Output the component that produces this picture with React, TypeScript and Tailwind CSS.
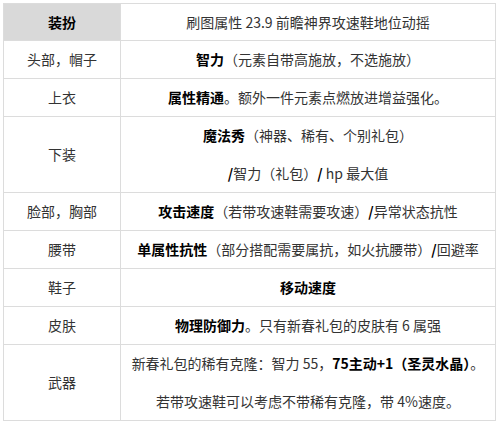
import React from 'react';

type Row = {
  part: string;
  lines: React.ReactNode[];
};

const rows: Row[] = [
  {
    part: '头部，帽子',
    lines: [<><b>智力</b>（元素自带高施放，不选施放）</>],
  },
  {
    part: '上衣',
    lines: [<><b>属性精通</b>。额外一件元素点燃放进增益强化。</>],
  },
  {
    part: '下装',
    lines: [
      <><b>魔法秀</b>（神器、稀有、个别礼包）</>,
      <><b>/</b>智力（礼包）<b>/</b> hp 最大值</>,
    ],
  },
  {
    part: '脸部，胸部',
    lines: [<><b>攻击速度</b>（若带攻速鞋需要攻速）<b>/</b>异常状态抗性</>],
  },
  {
    part: '腰带',
    lines: [<><b>单属性抗性</b>（部分搭配需要属抗，如火抗腰带）<b>/</b>回避率</>],
  },
  {
    part: '鞋子',
    lines: [<b>移动速度</b>],
  },
  {
    part: '皮肤',
    lines: [<><b>物理防御力</b>。只有新春礼包的皮肤有 6 属强</>],
  },
  {
    part: '武器',
    lines: [
      <>新春礼包的稀有克隆：智力 55，<b>75主动+1（圣灵水晶）</b>。</>,
      <>若带攻速鞋可以考虑不带稀有克隆，带 4%速度。</>,
    ],
  },
];

export default function App() {
  return (
    <div
      className="w-[500px] h-[422px] bg-white pl-[3px] pt-[3px] text-[14px] leading-[21px] text-[#333]"
      style={{ fontFamily: '"Noto Sans CJK SC", "Noto Sans", sans-serif' }}
    >
      <table className="w-[493px] border-collapse border border-[#dcdcdc] [&_b]:font-bold [&_b]:text-black">
        <colgroup>
          <col className="w-[117px]" />
          <col />
        </colgroup>
        <tbody>
          <tr>
            <td className="h-[37px] border border-[#dcdcdc] bg-[#d9d9d9] text-center font-bold text-black">
              装扮
            </td>
            <td className="h-[37px] border border-[#dcdcdc] text-center">
              刷图属性 23.9 前瞻神界攻速鞋地位动摇
            </td>
          </tr>
          {rows.map((row) => (
            <tr key={row.part}>
              <td className="border border-[#dcdcdc] px-1 py-2 text-center">{row.part}</td>
              <td className="border border-[#dcdcdc] px-1 py-2 text-center">
                <div className="flex flex-col gap-[17px]">
                  {row.lines.map((line, i) => (
                    <p key={i}>{line}</p>
                  ))}
                </div>
              </td>
            </tr>
          ))}
        </tbody>
      </table>
    </div>
  );
}
